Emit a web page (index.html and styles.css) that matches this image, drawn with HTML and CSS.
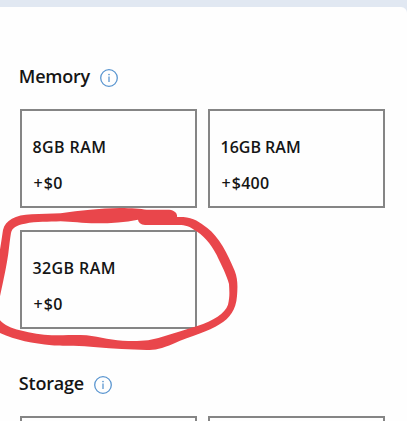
FILE: index.html
```html
<!DOCTYPE html>
<html lang="en">
<head>
    <meta charset="UTF-8">
    <meta name="viewport" content="width=device-width, initial-scale=1.0">
    <title>Memory and Storage</title>
    <link rel="stylesheet" href="styles.css">
</head>
<body>

    <main class="panel">
        <!-- Memory -->
        <section class="option-section">
            <h2 class="memory-title">
                <span>Memory</span>
                <svg class="info-icon" viewBox="0 0 18 18">
                    <circle class="ring" cx="9" cy="9" r="8.3"/>
                    <circle class="dot" cx="9" cy="5.5" r="0.85"/>
                    <path class="stem" d="M9 7.4V13"/>
                </svg>
            </h2>
            <div class="option-grid">
                <div class="card">
                    <p class="short">8GB RAM</p>
                    <p class="price"><span>+</span>$0</p>
                </div>
                <div class="card">
                    <p>16GB RAM</p>
                    <p class="price"><span>+</span>$400</p>
                </div>
                <div class="card">
                    <p class="short">32GB RAM</p>
                    <p class="price"><span>+</span>$0</p>
                </div>
            </div>
        </section>

        <!-- Storage -->
        <section class="option-section">
            <h2 class="storage-title">
                <span>Storage</span>
                <svg class="info-icon" viewBox="0 0 18 18">
                    <circle class="ring" cx="9" cy="9" r="8.3"/>
                    <circle class="dot" cx="9" cy="5.5" r="0.85"/>
                    <path class="stem" d="M9 7.4V13"/>
                </svg>
            </h2>
            <div class="option-grid">
                <div class="card"></div>
                <div class="card"></div>
            </div>
        </section>
    </main>

    <!-- Red marker around the 32GB option -->
    <svg class="marker" viewBox="0 0 1221 1263">
        <path fill-rule="evenodd" d="M-10 800 C-2 765 3 730 9 690 C16 661 45 645 95 643 L182 640 C240 632 300 624 360 624 C395 624 422 627 440 629 L508 629 C524 631 533 640 531 651 L550 651 C580 653 600 667 622 684 C658 712 682 760 704 812 C714 836 713 862 711 888 C708 930 689 955 660 972 C625 996 575 1006 520 1031 C485 1046 465 1050 440 1050 C390 1049 340 1047 290 1042 C240 1036 200 1040 155 1036 C95 1029 40 1020 -10 994 Z
        M-10 945 C0 969 25 983 60 991 C95 1000 125 1005 155 1006 C190 1006 220 1003 260 1006 C300 1011 340 1023 385 1023 C425 1024 455 1021 485 1011 C525 999 560 988 592 978 C640 962 675 940 684 914 C690 890 688 872 687 852 C680 825 665 797 650 765 C632 728 608 704 582 689 C563 676 550 675 530 675 L435 675 C422 673 415 668 414 659 C375 667 335 670 290 670 C245 670 215 665 182 664 C145 666 110 664 75 671 C50 675 36 683 33 699 C27 735 27 755 21 785 C14 825 4 870 -10 935 Z"/>
    </svg>

</body>
</html>
```
FILE: styles.css
```css
* {
    box-sizing: border-box;
}
body {
    margin: 0;
    padding-top: 7px;
    height: 421px;
    overflow: hidden;
    background-color: #e1e8f2;
    color: #151515;
    font-family: "Open Sans", "Noto Sans", sans-serif;
    font-weight: 600;
}
.panel {
    height: 414px;
    padding: 56px 22.5px 0 19.5px;
    overflow: hidden;
    background-color: #fefefe;
    border-top-right-radius: 6px;
}
.option-section {
    height: 307px;
}
h2 {
    display: flex;
    align-items: center;
    gap: 10.5px;
    height: 26px;
    margin: 0 0 20px -0.7px;
    font-size: 18px;
    font-weight: 600;
    line-height: 26px;
}
.memory-title span {
    width: 70.5px;
    letter-spacing: -0.25px;
}
.storage-title span {
    width: 65px;
    letter-spacing: -0.2px;
}
.info-icon {
    width: 18px;
    height: 18px;
    margin-top: 3px;
}
.ring {
    fill: none;
    stroke: #5b96d0;
    stroke-width: 1.3;
}
.dot {
    fill: #5b96d0;
}
.stem {
    stroke: #5b96d0;
    stroke-width: 1.3;
}
.option-grid {
    display: grid;
    grid-template-columns: 177px 177px;
    gap: 22px 11px;
}
.card {
    height: 99px;
    padding: 24px 11px 0;
    border: 2px solid #858585;
}
.card p {
    height: 24px;
    margin: 0 0 12px;
    font-size: 16px;
    line-height: 24px;
    white-space: nowrap;
}
.card .short {
    letter-spacing: 0.4px;
}
.card .price {
    padding-left: 1px;
    letter-spacing: 0.2px;
}
.price span {
    margin-right: 1px;
}
/* hand-drawn circle lies over the cards */
.marker {
    position: absolute;
    top: 0;
    left: 0;
    width: 407px;
    height: 421px;
    fill: #e9464b;
}
```
